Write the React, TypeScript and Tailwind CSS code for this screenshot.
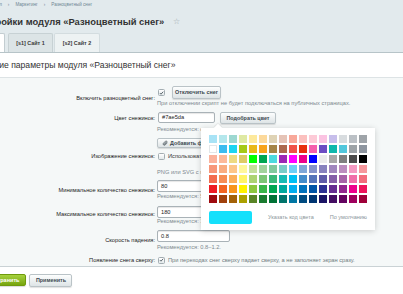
import { ReactNode } from 'react';

const palette: string[][] = [
  ['#a8e3f6', '#b4e7ec', '#9dd8d1', '#dfe9a3', '#fde99c', '#fcd99b', '#dfd3b5', '#e5c3b6', '#f8a89a', '#fbc0be', '#fdcad7', '#fbc3e2', '#c7beeb', '#d8dcdf', '#bbc0c5', '#9fa4a9'],
  ['#ffffff', '#3bbcef', '#1bd5f1', '#a5c916', '#e8b818', '#f7a31b', '#a58548', '#ac694e', '#ef5249', '#e72f0d', '#f45ead', '#6c4cc3', '#0eb7ac', '#52c7dc', '#9da3a7', '#8e959f'],
  ['#fbb39d', '#fcba9a', '#eddb83', '#decb65', '#00ff00', '#00a651', '#4ddadf', '#9d27b4', '#ff00ff', '#ec008c', '#0000ff', '#ebebeb', '#a8a8a8', '#7f7f7f', '#4b4b4b', '#000000'],
  ['#f7977a', '#f9ad81', '#fdc68a', '#fff79a', '#c4df9b', '#a2d39c', '#82ca9d', '#7bcdc8', '#6ecff6', '#7ea7d8', '#8493ca', '#8882be', '#a187be', '#bc8dbf', '#f49ac2', '#f6989d'],
  ['#f26c4f', '#f68e55', '#fbaf5c', '#fff467', '#acd372', '#7cc576', '#3bb878', '#1abbb4', '#00bff3', '#438cca', '#5574b9', '#605ca8', '#855fa8', '#a763a8', '#f06ea9', '#f26d7d'],
  ['#ed1c24', '#f26522', '#f7941d', '#fff200', '#8dc73f', '#39b54a', '#00a651', '#00a99d', '#00aeef', '#0072bc', '#0054a6', '#2e3192', '#662d91', '#92278f', '#ec008c', '#ed145b'],
  ['#9e0b0f', '#a0410d', '#a36209', '#aba000', '#598527', '#1a7b30', '#007236', '#00746b', '#0076a3', '#004b80', '#003471', '#1b1464', '#440e62', '#630460', '#9e005d', '#9e0039'],
];

function Checkbox({ checked = false }: { checked?: boolean }) {
  return (
    <span className="flex h-[7px] w-[7px] shrink-0 items-center justify-center rounded-[1.5px] border border-[#a3adb2] bg-gradient-to-b from-white to-[#e3e9eb]">
      {checked && (
        <svg viewBox="0 0 8 8" className="h-[6px] w-[6px]">
          <path d="M1.4 4.1 3.2 5.9 6.7 1.9" fill="none" stroke="#3b4850" strokeWidth="1.3" />
        </svg>
      )}
    </span>
  );
}

function Btn({ children, className = '' }: { children: ReactNode; className?: string }) {
  return (
    <div
      className={`flex shrink-0 items-center justify-center whitespace-nowrap rounded-[2px] border border-[#bac3c7] bg-gradient-to-b from-[#fdfefe] to-[#dee4e6] text-[5.4px] font-bold text-[#3d4950] shadow-[0_1px_1px_rgba(0,0,0,0.12)] ${className}`}
    >
      {children}
    </div>
  );
}

function Input({ value, className = '' }: { value: string; className?: string }) {
  return (
    <div
      className={`flex shrink-0 items-center rounded-[2px] border border-[#a9b2b7] bg-white pl-[3px] text-[5.7px] text-[#222] shadow-[inset_0_1px_1px_rgba(0,0,0,0.1)] ${className}`}
    >
      {value}
    </div>
  );
}

function Hint({ children, className = '' }: { children: ReactNode; className?: string }) {
  return <div className={`whitespace-nowrap text-[5.7px] leading-[7px] text-[#7d898f] ${className}`}>{children}</div>;
}

function Row({ label, labelTop, className = '', children }: { label: string; labelTop: string; className?: string; children: ReactNode }) {
  return (
    <div className={`flex ${className}`}>
      <div className={`w-[157px] shrink-0 whitespace-nowrap pr-[2px] text-right text-[5.7px] leading-[7px] text-[#222] ${labelTop}`}>
        {label}
      </div>
      <div className="flex flex-col items-start">{children}</div>
    </div>
  );
}

function ColorPopup() {
  return (
    <div className="absolute left-[201px] top-[128px] w-[174px] bg-white px-[8px] pb-[6px] pt-[7px] shadow-[0_1px_6px_rgba(0,0,0,0.18)]">
      <div className="absolute -top-[3px] left-[14px] h-[6px] w-[6px] rotate-45 bg-white shadow-[-1px_-1px_1px_rgba(0,0,0,0.06)]" />
      <div className="relative grid grid-cols-[repeat(16,8px)] gap-[2px]">
        {palette.flat().map((c, i) => (
          <div
            key={i}
            className={`h-[8px] w-[8px] ${c === '#ffffff' ? 'border border-[#e2e6e8]' : ''}`}
            style={{ backgroundColor: c }}
          />
        ))}
      </div>
      <div className="mt-[8px] flex items-center text-[5.5px] text-[#8b969b]">
        <div className="h-[13px] w-[43px] rounded-[2px] bg-[#15e0fb]" />
        <span className="ml-[16px] whitespace-nowrap">Указать код цвета</span>
        <span className="ml-auto whitespace-nowrap">По умолчанию</span>
      </div>
    </div>
  );
}

export default function App() {
  return (
    <div className="relative h-[294px] w-[403px] overflow-hidden bg-white font-['Liberation_Sans',Arial,sans-serif]">
      {/* header */}
      <div className="h-[53px] border-b border-[#b7c4c8] bg-[#e2eaed]">
        <div className="flex whitespace-nowrap pt-[2px] text-[4.6px] leading-[6px] text-[#6f8794]">
          <span className="ml-[-27px]">Рабочий стол</span>
          <span className="mx-[6px]">›</span>
          <span>Маркетинг</span>
          <span className="mx-[6px]">›</span>
          <span>Разноцветный снег</span>
        </div>
        <div className="mt-[8px] flex items-center whitespace-nowrap leading-[12px]">
          <span className="ml-[-26.4px] text-[9.4px] font-bold text-[#333]">Настройки модуля «Разноцветный снег»</span>
          <span className="ml-[9px] text-[8px] text-[#9aa6ab]">☆</span>
        </div>
        <div className="mt-[5px] flex h-[19px] items-end text-[5.4px] font-bold text-[#3a3a3a]">
          <div className="ml-[-20px] h-[19px] w-[25px] rounded-t-[2px] border border-b-0 border-[#c3cdd1] bg-white" />
          <div className="ml-[3px] flex h-[19px] w-[45px] items-center justify-center rounded-t-[2px] border border-b-0 border-[#c7d1d4] bg-[#dce4e6]">
            [s1] Сайт 1
          </div>
          <div className="ml-[1px] flex h-[19px] w-[46px] items-center justify-center rounded-t-[2px] border border-b-0 border-[#d3dcdf] bg-[#edf2f3]">
            [s2] Сайт 2
          </div>
        </div>
      </div>

      {/* section heading */}
      <div className="flex h-[25px] items-center border-b border-[#dde3e5] bg-white">
        <span className="ml-[-19.5px] whitespace-nowrap text-[8.6px] text-[#333]">Общие параметры модуля «Разноцветный снег»</span>
      </div>

      {/* form */}
      <div className="h-[189px] border-b border-[#cad2d5] bg-[#f5f8f8] pt-[8px]">
        <Row label="Включить разноцветный снег:" labelTop="pt-[8.5px]">
          <div className="flex h-[13px] items-center gap-[7px] pl-[1px]">
            <Checkbox checked />
            <Btn className="h-[13px] w-[49px]">Отключить снег</Btn>
          </div>
          <Hint className="mt-[1px]">При отключении скрипт не будет подключаться на публичных страницах.</Hint>
        </Row>

        <Row label="Цвет снежинок:" labelTop="pt-[2.5px]" className="mt-[5px]">
          <div className="flex items-start gap-[5px] pl-[1px]">
            <Input value="#7ae5da" className="h-[11px] w-[57px]" />
            <Btn className="h-[12px] w-[56px]">Подобрать цвет</Btn>
          </div>
          <Hint className="mt-[1.5px]">Рекомендуется: светлые оттенки.</Hint>
        </Row>

        <Row label="Изображение снежинок:" labelTop="pt-[14.5px]" className="mt-[5.5px]">
          <Btn className="h-[10px] justify-start gap-[2px] pl-[4px] pr-[6px]">
            <svg viewBox="0 0 24 24" className="h-[6px] w-[6px]" fill="none" stroke="#3d4950" strokeWidth="2.6" strokeLinecap="round">
              <path d="M21 11.5 12.5 20a5 5 0 0 1-7-7L14 4.5a3.3 3.3 0 0 1 4.7 4.7L10.2 17.7a1.7 1.7 0 0 1-2.4-2.4L15.5 7.6" />
            </svg>
            Добавить файл
          </Btn>
          <div className="mt-[4px] flex h-[8px] items-center gap-[3px] pl-[1px]">
            <Checkbox />
            <span className="whitespace-nowrap text-[5.7px] text-[#333]">Использовать стандартные снежинки</span>
          </div>
          <Hint className="mt-[8.5px]">PNG или SVG с прозрачным фоном.</Hint>
        </Row>

        <Row label="Минимальное количество снежинок:" labelTop="pt-[6.5px]" className="mt-[4.5px]">
          <Input value="80" className="h-[12px] w-[73px]" />
          <Hint className="mt-[1.2px]">Рекомендуется: 50–100.</Hint>
        </Row>

        <Row label="Максимальное количество снежинок:" labelTop="pt-[5.5px]" className="mt-[5.8px]">
          <Input value="180" className="h-[12px] w-[73px]" />
          <Hint className="mt-[0.5px]">Рекомендуется: 150–250.</Hint>
        </Row>

        <Row label="Скорость падения:" labelTop="pt-[7.5px]" className="mt-[4.5px]">
          <Input value="0.8" className="h-[12px] w-[73px]" />
          <Hint className="mt-[2.5px]">Рекомендуется: 0.8–1.2.</Hint>
        </Row>

        <Row label="Появление снега сверху:" labelTop="pt-[0.7px]" className="mt-[5px]">
          <div className="flex h-[8px] items-center gap-[3px] pl-[1px]">
            <Checkbox checked />
            <span className="whitespace-nowrap text-[5.7px] text-[#6f7b80]">
              При переходах снег сверху падает сверху, а не заполняет экран сразу.
            </span>
          </div>
        </Row>
      </div>

      {/* buttons */}
      <div className="flex items-start gap-[3px] pt-[7px]">
        <div className="ml-[-17px] flex h-[12px] items-center rounded-[2px] border border-[#6f9a0c] bg-gradient-to-b from-[#a6d23c] to-[#77a50b] px-[6px] text-[5.5px] font-bold text-white shadow-[0_1px_1px_rgba(0,0,0,0.15)]">
          Сохранить
        </div>
        <Btn className="h-[13px] w-[43px]">Применить</Btn>
      </div>

      <ColorPopup />
    </div>
  );
}
